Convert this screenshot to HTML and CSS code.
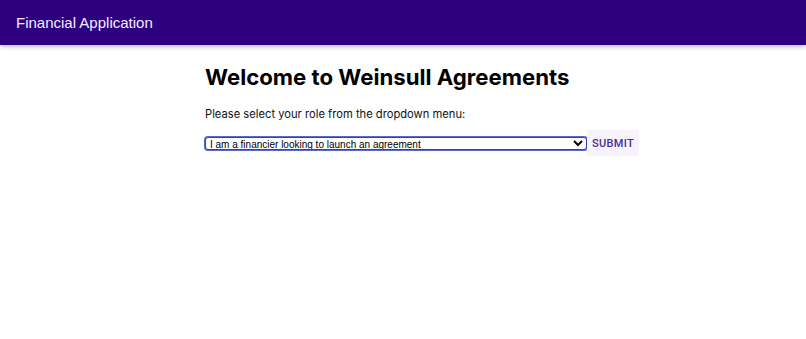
FILE: index.html
```html
<!DOCTYPE html>
<html>
<head>
<meta charset="utf-8">
<link rel="stylesheet" href="styles.css">
</head>
<body>
<header class="app-bar">
  <div class="app-title">Financial Application</div>
</header>
<main class="container">
  <h1 class="welcome">Welcome to Weinsull Agreements</h1>
  <p class="prompt">Please select your role from the dropdown menu:</p>
  <form class="role-form">
    <select class="role-select">
      <option>I am a financier looking to launch an agreement</option>
      <option>I am an investor</option>
    </select>
    <button type="button" class="submit-btn">SUBMIT</button>
  </form>
</main>
</body>
</html>
```
FILE: styles.css
```css
html, body {
  margin: 0;
  padding: 0;
  background: #ffffff;
  font-family: "Liberation Sans", Arial, sans-serif;
}
.app-bar {
  height: 45px;
  background: #2e007f;
  display: flex;
  align-items: center;
  padding: 0 16px;
  box-shadow: 0 2px 4px rgba(0,0,0,0.25);
}
.app-title {
  color: #f3ecff;
  font-size: 15px;
  padding-bottom: 1px;
}
.container {
  width: 396px;
  margin: 0 auto;
  white-space: nowrap;
}
.welcome {
  font-family: Inter, "Liberation Sans", sans-serif;
  font-size: 22.2px;
  font-weight: 700;
  margin: 18px 0 0 0;
  line-height: 27px;
  color: #000;
}
.prompt {
  font-family: Inter, "Liberation Sans", sans-serif;
  font-size: 11.2px;
  color: #111;
  margin: 17px 0 0 0;
  line-height: 14px;
}
.role-form {
  display: flex;
  align-items: center;
  margin-top: 9px;
}
.role-select {
  flex-shrink: 0;
  width: 382px;
  height: 13px;
  font-family: "Liberation Sans", Arial, sans-serif;
  font-size: 10px;
  border: 1px solid #3040b0;
  border-radius: 3px;
  padding: 0;
  background: #fff;
  color: #000;
  box-shadow: 0 0 0 1px #5a6ad0;
}
.submit-btn {
  flex-shrink: 0;
  width: 52px;
  height: 26px;
  margin-left: 0;
  border: none;
  background: #f6f3fb;
  color: #4a2a98;
  font-family: Roboto, "Liberation Sans", sans-serif;
  font-size: 11px;
  font-weight: 500;
  letter-spacing: 0.3px;
  padding: 0;
}
```
